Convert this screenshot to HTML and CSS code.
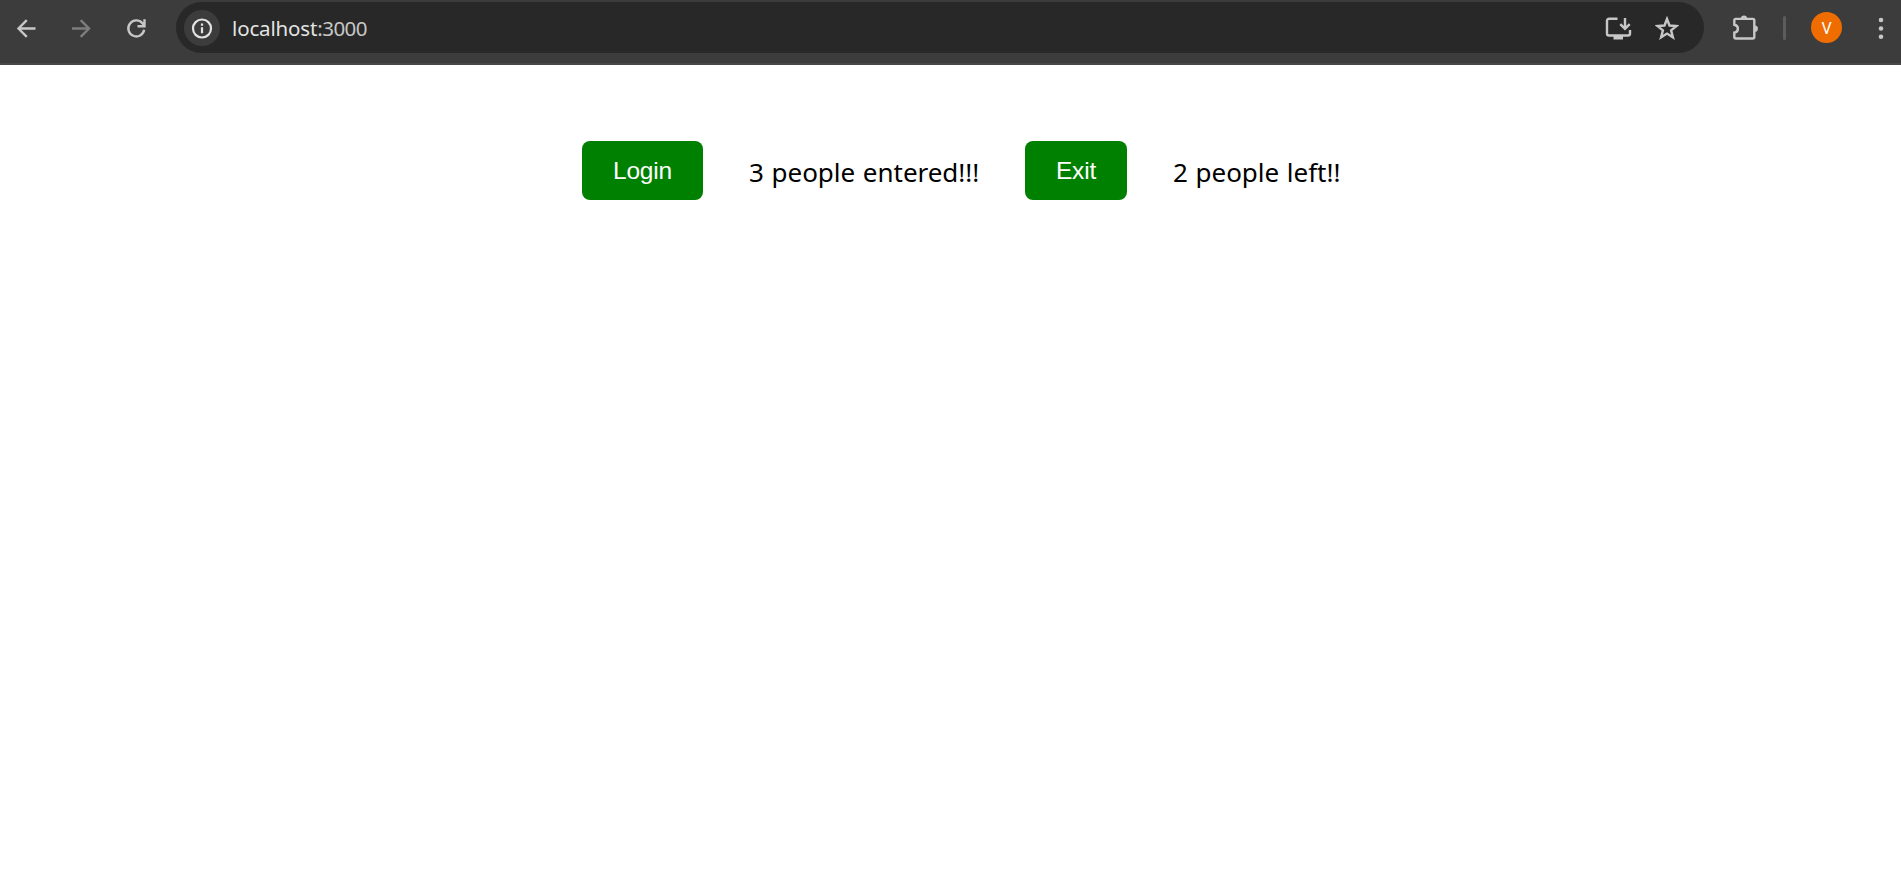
FILE: index.html
```html
<!DOCTYPE html>
<html lang="en">
<head>
<meta charset="utf-8">
<title>localhost:3000</title>
<link rel="stylesheet" href="styles.css">
</head>
<body>
<header class="toolbar">
  <nav class="nav">
    <svg class="icon" width="24" height="24" viewBox="0 0 24 24"><path d="M21.500 12.500H5M12.800 4.200 4.500 12.500l8.300 8.300"/></svg>
    <svg class="icon dim" width="24" height="24" viewBox="0 0 24 24"><path d="M3 12.500h16.500M11.700 4.200l8.300 8.300-8.300 8.300"/></svg>
    <svg class="icon" width="24" height="24" viewBox="0 0 24 24"><path d="M20.200 13.800A8 8 0 1 1 18.400 7.200L20.300 9.500M20.500 3.200v7H13.500"/></svg>
  </nav>
  <div class="address">
    <span class="info"><svg class="icon bright" width="24" height="24" viewBox="0 0 24 24"><circle cx="12" cy="12.500" r="9"/><path d="M12 11.300v6M12 7.500v2.200"/></svg></span>
    <span class="url">localhost<span class="port">:3000</span></span>
    <svg class="icon install" width="28" height="28" viewBox="0 0 28 28"><path d="M13.500 4.800H5a2 2 0 0 0-2 2V19.500a2 2 0 0 0 2 2h19a2 2 0 0 0 2-2V16M21 4v11M16.300 10.200l4.700 4.700 4.700-4.700"/><path class="solid" d="M9.500 21h9.500v4.500H9.500z"/></svg>
    <svg class="icon star" width="24" height="24" viewBox="0 0 24 24"><path d="m12 3 2.500 6.500 7 .5-5.400 4.400 1.800 6.900L12 17.600l-5.900 3.700 1.800-6.900L2.500 10l7-.5z"/></svg>
  </div>
  <div class="actions">
    <svg class="icon" width="28" height="28" viewBox="0 0 28 28"><path d="M4.800 4.900H21.800a1.500 1.500 0 0 1 1.500 1.500V23a1.500 1.500 0 0 1-1.500 1.500H4.800A1.500 1.500 0 0 1 3.300 23V18.600c4.800-.8 4.800-7 0-7.800V6.400a1.500 1.500 0 0 1 1.500-1.500"/><path class="solid" d="M9.900 4.500a3.100 3.100 0 0 1 6.200 0zM23.800 11.600a3.100 3.100 0 0 1 0 6.200z"/></svg>
    <span class="divider"></span>
    <span class="avatar">V</span>
    <svg class="dots" width="6" height="24" viewBox="0 0 6 24"><circle cx="3" cy="4" r="2.300"/><circle cx="3" cy="12.500" r="2.300"/><circle cx="3" cy="20.800" r="2.300"/></svg>
  </div>
</header>
<main class="counter">
  <button class="btn login">Login</button>
  <span class="label entered">3 people entered!!!</span>
  <button class="btn exit">Exit</button>
  <span class="label">2 people left!!</span>
</main>
</body>
</html>
```
FILE: styles.css
```css
body {
  margin: 0;
  background: #fff;
  font-family: "Noto Sans", sans-serif;
}

.toolbar {
  box-sizing: border-box;
  height: 65px;
  padding: 2px 0 10px 14px;
  display: flex;
  align-items: center;
  background: #3c3c3c;
  border-bottom: 2px solid #474747;
}

.nav {
  display: flex;
  gap: 31px;
  width: 162px;
}

.icon {
  display: block;
  flex: none;
  fill: none;
  stroke: #c7c7c7;
  stroke-width: 2.4;
}

.dim { stroke: #7d7d7d; }
.bright { stroke: #e3e3e3; stroke-width: 2.2; }
.solid { fill: #c7c7c7; stroke: none; }

.address {
  box-sizing: border-box;
  width: 1528px;
  height: 51px;
  padding: 0 25px 0 8px;
  border-radius: 26px;
  background: #282828;
  display: flex;
  align-items: center;
}

.info {
  width: 36px;
  height: 36px;
  border-radius: 50%;
  background: #3c3c3c;
  display: flex;
  align-items: center;
  justify-content: center;
}

.url {
  margin-left: 12px;
  font-size: 20.5px;
  line-height: 28px;
  letter-spacing: -0.15px;
  color: #e3e3e3;
}

.port {
  color: #c7c7c7;
  letter-spacing: -0.55px;
}

.install { margin-left: auto; }
.star { margin-left: 23px; }

.actions {
  display: flex;
  align-items: center;
  margin-left: 27px;
}

.divider {
  width: 3px;
  height: 24px;
  margin-left: 24px;
  border-radius: 2px;
  background: #5c5c5c;
}

.avatar {
  width: 31px;
  height: 31px;
  margin-left: 25px;
  border-radius: 50%;
  background: #ef6c00;
  color: #fff;
  font: 16px/33px Roboto, sans-serif;
  text-align: center;
}

.dots {
  margin-left: 36px;
  fill: #c7c7c7;
}

.counter {
  display: flex;
  align-items: center;
  padding: 76px 0 0 582px;
}

.btn {
  height: 59px;
  padding: 0 0 1px;
  border: 0;
  border-radius: 8px;
  background: green;
  color: #fff;
  font: 24.5px/29px "Liberation Sans", Arial, sans-serif;
  letter-spacing: -0.2px;
}

.login { width: 121px; }
.exit { width: 102px; }

.label {
  margin-left: 46px;
  padding-top: 2px;
  font-size: 26px;
  line-height: 36px;
  letter-spacing: -0.03px;
  word-spacing: 1px;
  color: #000;
  white-space: nowrap;
}

.entered { width: 276px; }
```
